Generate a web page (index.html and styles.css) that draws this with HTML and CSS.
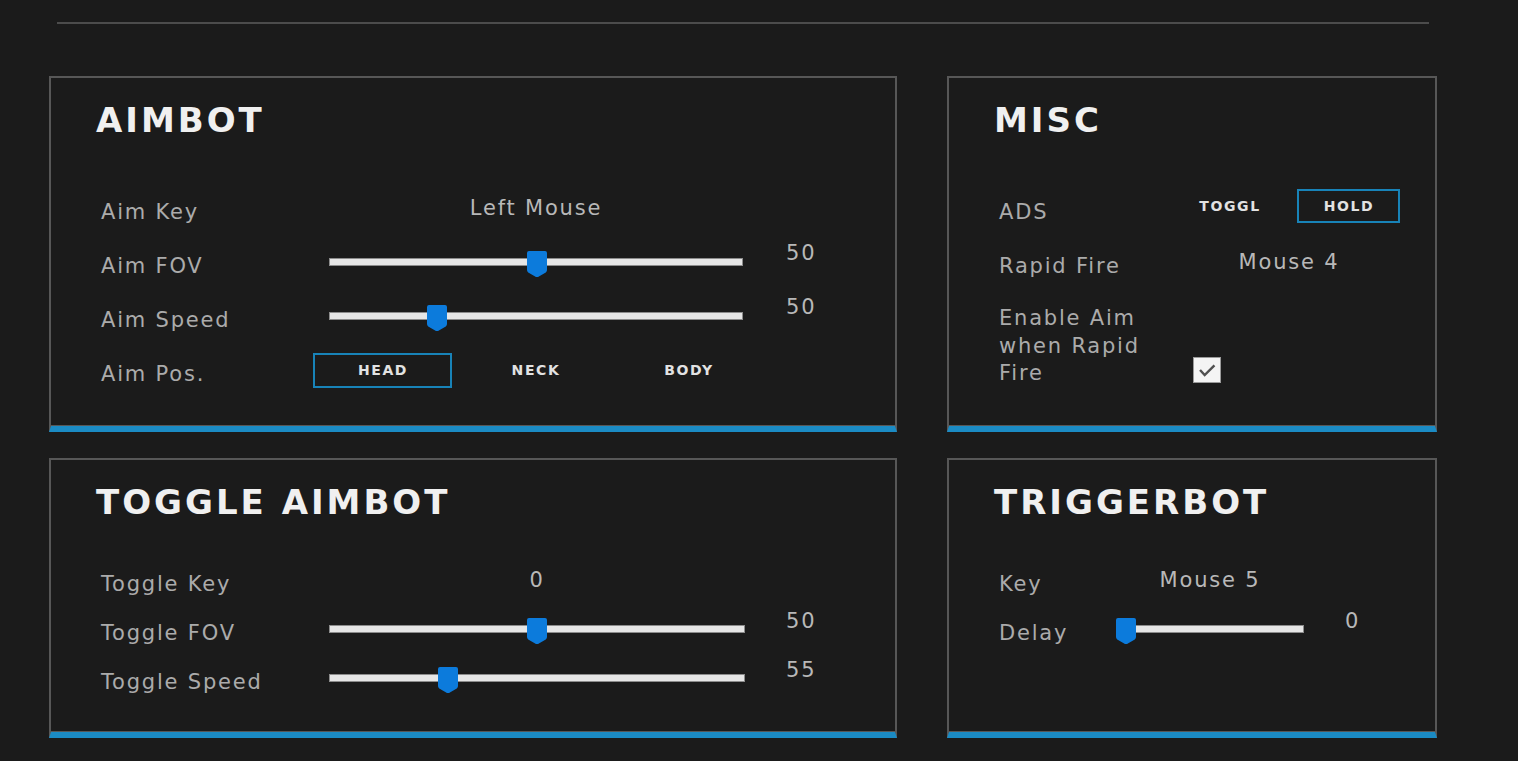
FILE: index.html
```html
<!DOCTYPE html>
<html>
<head>
<meta charset="utf-8">
<title>Settings</title>
<link rel="stylesheet" href="styles.css">
</head>
<body>
<div class="page">
  <div class="topline"></div>
  <div class="grid">
    <section class="panel">
      <h2 class="title">AIMBOT</h2>
      <div class="rows rows-main">
        <div class="row">
          <div class="label">Aim Key</div>
          <div class="ctrl"><div class="keyval wide">Left Mouse</div></div>
          <div></div>
        </div>
        <div class="row">
          <div class="label">Aim FOV</div>
          <div class="ctrl"><div class="slider wide"><div class="track"></div><svg class="thumb" style="left:calc(0.503 * (100% - 20px))" viewBox="0 0 20 26" width="20" height="26"><path d="M2 0H18Q20 0 20 2V19Q20 20.5 18.8 21.4L11 26Q10 26.6 9 26L1.2 21.4Q0 20.5 0 19V2Q0 0 2 0Z"/></svg></div></div>
          <div class="num">50</div>
        </div>
        <div class="row">
          <div class="label">Aim Speed</div>
          <div class="ctrl"><div class="slider wide"><div class="track"></div><svg class="thumb" style="left:calc(0.249 * (100% - 20px))" viewBox="0 0 20 26" width="20" height="26"><path d="M2 0H18Q20 0 20 2V19Q20 20.5 18.8 21.4L11 26Q10 26.6 9 26L1.2 21.4Q0 20.5 0 19V2Q0 0 2 0Z"/></svg></div></div>
          <div class="num">50</div>
        </div>
        <div class="row">
          <div class="label">Aim Pos.</div>
          <div class="ctrl">
            <div class="btns pos">
              <div class="btn active">HEAD</div>
              <div class="btn">NECK</div>
              <div class="btn">BODY</div>
            </div>
          </div>
          <div></div>
        </div>
      </div>
    </section>

    <section class="panel">
      <h2 class="title">MISC</h2>
      <div class="rows rows-misc">
        <div class="row">
          <div class="label">ADS</div>
          <div class="ctrl">
            <div class="btns ads">
              <div class="btn">TOGGL</div>
              <div class="btn active">HOLD</div>
            </div>
          </div>
        </div>
        <div class="row">
          <div class="label">Rapid Fire</div>
          <div class="ctrl"><div class="keyval misc-key">Mouse 4</div></div>
        </div>
        <div class="row row-check">
          <div class="label multi">Enable Aim<br>when Rapid<br>Fire</div>
          <div class="ctrl">
            <div class="checkbox"><svg viewBox="0 0 28 26" width="28" height="26"><path d="M6.5 13L11.5 18.5L22 8" fill="none" stroke="#505050" stroke-width="2.6"/></svg></div>
          </div>
        </div>
      </div>
    </section>

    <section class="panel">
      <h2 class="title">TOGGLE AIMBOT</h2>
      <div class="rows rows-main rows-small">
        <div class="row">
          <div class="label">Toggle Key</div>
          <div class="ctrl"><div class="keyval wide2">0</div></div>
          <div></div>
        </div>
        <div class="row">
          <div class="label">Toggle FOV</div>
          <div class="ctrl"><div class="slider wide2"><div class="track"></div><svg class="thumb" style="left:calc(0.5 * (100% - 20px))" viewBox="0 0 20 26" width="20" height="26"><path d="M2 0H18Q20 0 20 2V19Q20 20.5 18.8 21.4L11 26Q10 26.6 9 26L1.2 21.4Q0 20.5 0 19V2Q0 0 2 0Z"/></svg></div></div>
          <div class="num">50</div>
        </div>
        <div class="row">
          <div class="label">Toggle Speed</div>
          <div class="ctrl"><div class="slider wide2"><div class="track"></div><svg class="thumb" style="left:calc(0.275 * (100% - 20px))" viewBox="0 0 20 26" width="20" height="26"><path d="M2 0H18Q20 0 20 2V19Q20 20.5 18.8 21.4L11 26Q10 26.6 9 26L1.2 21.4Q0 20.5 0 19V2Q0 0 2 0Z"/></svg></div></div>
          <div class="num">55</div>
        </div>
      </div>
    </section>

    <section class="panel">
      <h2 class="title">TRIGGERBOT</h2>
      <div class="rows rows-trig rows-small">
        <div class="row">
          <div class="label">Key</div>
          <div class="ctrl"><div class="keyval narrow">Mouse 5</div></div>
          <div></div>
        </div>
        <div class="row">
          <div class="label">Delay</div>
          <div class="ctrl"><div class="slider narrow"><div class="track"></div><svg class="thumb" style="left:calc(0 * (100% - 20px))" viewBox="0 0 20 26" width="20" height="26"><path d="M2 0H18Q20 0 20 2V19Q20 20.5 18.8 21.4L11 26Q10 26.6 9 26L1.2 21.4Q0 20.5 0 19V2Q0 0 2 0Z"/></svg></div></div>
          <div class="num">0</div>
        </div>
      </div>
    </section>
  </div>
</div>
</body>
</html>
```

FILE: styles.css
```css
html, body {
  margin: 0;
  padding: 0;
  background: #1b1b1b;
  height: 100%;
  overflow: hidden;
}

.page {
  font-family: "DejaVu Sans", "Liberation Sans", sans-serif;
  color: #b4b4b4;
  padding-top: 22px;
}

.topline {
  margin-left: 57px;
  width: 1372px;
  height: 2px;
  background: #4c4c4c;
}

.grid {
  margin-top: 52px;
  margin-left: 49px;
  display: grid;
  grid-template-columns: 848px 490px;
  grid-template-rows: 356px 279px;
  column-gap: 50px;
  row-gap: 27px;
}

.panel {
  box-sizing: border-box;
  border: 2px solid #575757;
  border-bottom: 6px solid #1b8bc4;
  box-shadow: inset 0 -1px 0 #575757;
  padding: 22px 0 0 45px;
}

.panel:nth-child(n+3) {
  margin-top: -1px;
}

.title {
  margin: 0;
  font-size: 34px;
  line-height: 40px;
  font-weight: bold;
  letter-spacing: 3px;
  color: #f0f0f0;
}

.rows {
  padding-left: 5px;
  margin-top: 41px;
}

.row {
  display: grid;
  height: 54px;
  align-items: center;
}

.rows-main .row {
  grid-template-columns: 212px 432px auto;
}

.rows-misc .row {
  grid-template-columns: 179px auto;
}

.rows-trig .row {
  grid-template-columns: 117px 188px auto;
}

.rows-small {
  margin-top: 33px;
}

.rows-small .row {
  height: 49px;
}

.label {
  font-size: 21px;
  line-height: 24px;
  letter-spacing: 1.8px;
  padding-top: 8px;
  color: #ababab;
  white-space: nowrap;
}

.label.multi {
  line-height: 27.5px;
  padding-top: 0;
}

.ctrl {
  position: relative;
}

.keyval {
  font-size: 21px;
  line-height: 24px;
  letter-spacing: 1.8px;
  text-align: center;
  color: #b8b8b8;
}

.wide {
  margin-left: 16px;
  width: 414px;
}

.wide2 {
  margin-left: 16px;
  width: 416px;
}

.narrow {
  width: 188px;
}

.misc-key {
  width: 222px;
}

.num {
  align-self: start;
  margin-top: 6px;
  margin-left: 41px;
  font-size: 21px;
  line-height: 24px;
  letter-spacing: 1.8px;
  color: #b8b8b8;
}

.rows-small .num {
  margin-top: 5px;
}

.slider {
  position: relative;
  height: 8px;
}

.track {
  box-sizing: border-box;
  height: 8px;
  background: #e6e6e6;
  border: 1px solid #8c8c8c;
}

.thumb {
  position: absolute;
  top: -7px;
  display: block;
}

.thumb path {
  fill: #0c7bdc;
}

.btns {
  display: flex;
}

.btns.pos {
  gap: 14px;
}

.btns.pos .btn {
  flex: 0 0 139px;
  height: 35px;
}

.btns.ads {
  gap: 16px;
  margin-top: -4px;
}

.btns.ads .btn {
  flex: 0 0 103px;
  height: 34px;
}

.btn {
  box-sizing: border-box;
  border: 2px solid transparent;
  display: flex;
  align-items: center;
  justify-content: center;
  font-size: 14px;
  font-weight: bold;
  letter-spacing: 1.6px;
  color: #e2e2e2;
  padding-left: 1px;
}

.btn.active {
  border-color: #1883b8;
}

.row-check {
  height: auto;
  margin-top: 16px;
  align-items: end;
}

.checkbox {
  margin-left: 15px;
  margin-bottom: 5px;
  width: 28px;
  height: 26px;
  box-sizing: border-box;
  background: #f4f4f4;
  border: 1px solid #9a9a9a;
  display: flex;
  align-items: center;
  justify-content: center;
}

.checkbox svg {
  display: block;
}
```
